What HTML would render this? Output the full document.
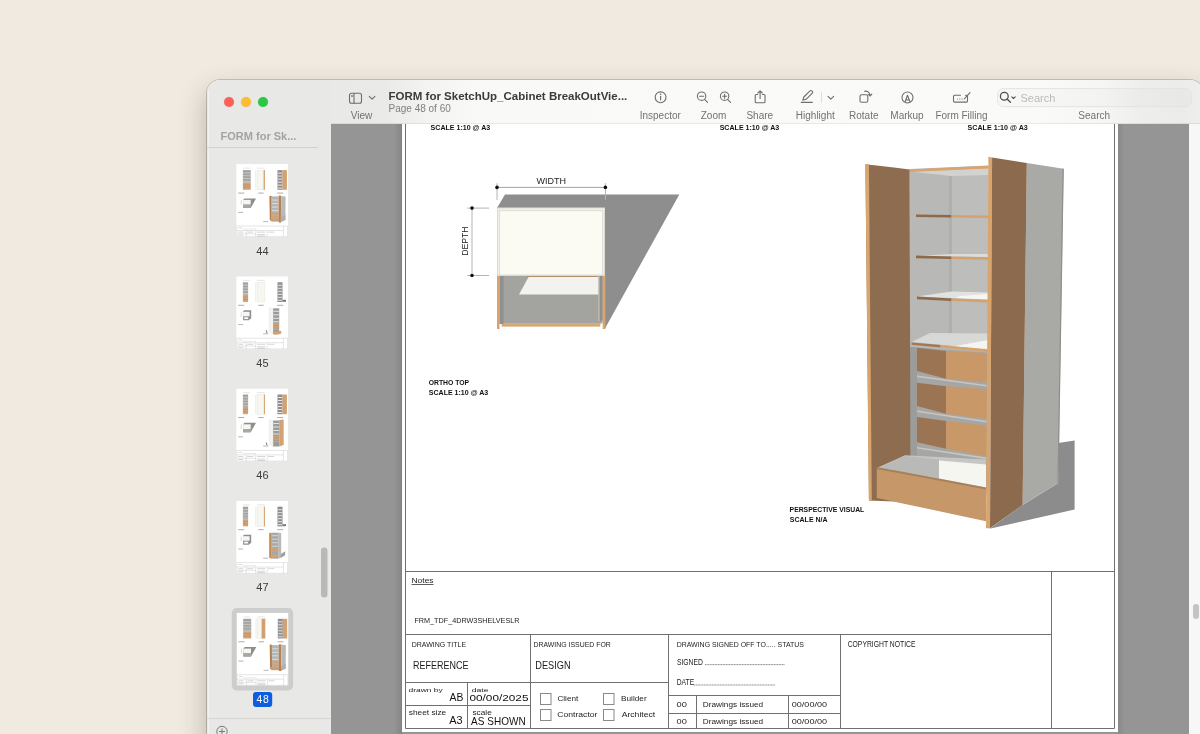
<!DOCTYPE html>
<html><head><meta charset="utf-8">
<style>
html,body{margin:0;padding:0;}
body{width:1200px;height:734px;overflow:hidden;position:relative;background:#f0eae0;font-family:"Liberation Sans",sans-serif;}
.abs{position:absolute;}
#shadow{position:absolute;left:207px;top:80px;width:996px;height:720px;border-radius:13px;box-shadow:0 12px 28px rgba(45,42,36,0.30),0 0 0 0.8px rgba(70,66,60,0.30);}
#win{position:absolute;left:207px;top:80px;width:996px;height:700px;border-radius:13px 13px 0 0;overflow:hidden;background:#e8e8e7;}
#side{position:absolute;left:0;top:0;width:124px;height:700px;background:#e8e8e7;}
#doc{position:absolute;left:124px;top:44px;width:858px;height:660px;background:#959595;}
#tb{position:absolute;left:124px;top:0;width:872px;height:44px;background:linear-gradient(90deg,#e9e9e8 0px,#eaeae9 55px,#f3f3f2 95px,#f9f9f8 150px,#fafaf9 700px,#f6f6f5 770px,#eeeeed 810px,#ebebea 850px,#eeeeed 869px);}
#tb:after{content:"";position:absolute;left:0;right:0;bottom:0;height:1px;background:rgba(0,0,0,0.07);}
#vscroll{position:absolute;left:982px;top:44px;width:14px;height:660px;background:#f7f7f7;}
.lbl{position:absolute;font-size:10px;color:#7c7c7c;white-space:nowrap;line-height:10px;}
.tl{position:absolute;width:10.6px;height:10.6px;border-radius:50%;box-shadow:0 0 0 0.5px rgba(0,0,0,0.06);}
svg text{font-family:"Liberation Sans",sans-serif;}
svg{will-change:transform;}
</style></head>
<body>
<div id="shadow"></div>
<div id="win">
  <div id="side"></div><div class="abs" style="left:0.5px;top:10px;width:1.5px;height:700px;background:#f2f2f1"></div>
  <div id="doc"></div>
  <div id="vscroll"><div style="position:absolute;left:4px;top:480px;width:6px;height:15px;border-radius:3px;background:#c4c4c4"></div></div>
  <div class="abs" style="left:-207px;top:-80px;width:1200px;height:734px">
<svg class="abs" style="left:0;top:0" width="1200" height="734" viewBox="0 0 1200 734">
 <!-- page -->
 <defs><linearGradient id="pshL" x1="0" x2="1"><stop offset="0" stop-color="#000" stop-opacity="0"/><stop offset="1" stop-color="#000" stop-opacity="0.10"/></linearGradient>
 <linearGradient id="pshR" x1="1" x2="0"><stop offset="0" stop-color="#000" stop-opacity="0"/><stop offset="1" stop-color="#000" stop-opacity="0.08"/></linearGradient></defs>
 <rect x="394" y="80" width="8" height="660" fill="url(#pshL)"/>
 <rect x="1118" y="80" width="6" height="660" fill="url(#pshR)"/>
 <rect x="401.3" y="80" width="0.9" height="660" fill="#7a7a7a" opacity="0.6"/>
 <rect x="402" y="80" width="716" height="652" fill="#ffffff"/>
 <g fill="none" stroke="#707070" stroke-width="1">
  <path d="M405.5 80V728.5H1114.5V80"/>
  <path d="M405 571.5H1114"/>
  <path d="M1051.5 571V728"/>
  <path d="M405 634.5H1051"/>
  <path d="M530.5 634V728M668.5 634V728M840.5 634V728"/>
  <path d="M405 682.5H668"/>
  <path d="M467.5 682V728"/>
  <path d="M405 705.5H530"/>
  <path d="M668 695.5H840M668 713.5H840"/>
  <path d="M696.5 695V728M788.5 695V728"/>
 </g>
 <!-- checkboxes -->
 <g fill="none" stroke="#8a8a8a" stroke-width="1">
  <rect x="540.5" y="693.5" width="10.5" height="11"/>
  <rect x="540.5" y="709.5" width="10.5" height="11"/>
  <rect x="603.5" y="693.5" width="10.5" height="11"/>
  <rect x="603.5" y="709.5" width="10.5" height="11"/>
 </g>
 <!-- texts -->
<text transform="translate(411.53,583.20) scale(1.164,1)" font-size="7.25" fill="#222" text-decoration="underline">Notes</text>
<text transform="translate(414.42,623.00) scale(1.031,1)" font-size="7.04" fill="#1c1c1c" >FRM_TDF_4DRW3SHELVESLR</text>
<text transform="translate(411.74,646.75) scale(0.882,1)" font-size="7.93" fill="#222" >DRAWING TITLE</text>
<text transform="translate(413.08,669.00) scale(0.838,1)" font-size="10.71" fill="#1a1a1a" >REFERENCE</text>
<text transform="translate(533.45,646.75) scale(0.885,1)" font-size="7.82" fill="#222" >DRAWING ISSUED FOR</text>
<text transform="translate(535.26,669.00) scale(0.874,1)" font-size="10.56" fill="#1a1a1a" >DESIGN</text>
<text transform="translate(676.64,646.80) scale(0.884,1)" font-size="7.89" fill="#222" >DRAWING SIGNED OFF TO..... STATUS</text>
<text transform="translate(676.93,664.90) scale(0.832,1)" font-size="8.17" fill="#222" >SIGNED</text>
<text transform="translate(676.66,685.30) scale(0.802,1)" font-size="8.41" fill="#222" >DATE</text>
<text transform="translate(847.66,647.00) scale(0.829,1)" font-size="8.21" fill="#222" >COPYRIGHT NOTICE</text>
<text transform="translate(408.56,692.00) scale(1.373,1)" font-size="6.16" fill="#1c1c1c" >drawn by</text>
<text transform="translate(449.60,700.80) scale(0.945,1)" font-size="11.01" fill="#111" >AB</text>
<text transform="translate(408.73,714.60) scale(1.218,1)" font-size="6.85" fill="#1c1c1c" >sheet size</text>
<text transform="translate(449.20,723.70) scale(1.022,1)" font-size="10.71" fill="#111" >A3</text>
<text transform="translate(471.65,692.00) scale(1.446,1)" font-size="6.03" fill="#1c1c1c" >date</text>
<text transform="translate(469.45,700.80) scale(1.197,1)" font-size="9.86" fill="#111" >00/00/2025</text>
<text transform="translate(472.43,714.60) scale(1.288,1)" font-size="6.44" fill="#1c1c1c" >scale</text>
<text transform="translate(471.10,724.60) scale(0.989,1)" font-size="10.14" fill="#111" >AS SHOWN</text>
<text transform="translate(557.39,701.20) scale(1.170,1)" font-size="6.99" fill="#1c1c1c" >Client</text>
<text transform="translate(557.37,717.30) scale(1.092,1)" font-size="7.86" fill="#1c1c1c" >Contractor</text>
<text transform="translate(621.04,701.20) scale(1.180,1)" font-size="6.99" fill="#1c1c1c" >Builder</text>
<text transform="translate(621.70,717.30) scale(1.146,1)" font-size="7.53" fill="#1c1c1c" >Architect</text>
<text transform="translate(676.62,707.20) scale(1.225,1)" font-size="7.57" fill="#222" >00</text>
<text transform="translate(702.84,707.20) scale(1.136,1)" font-size="7.26" fill="#222" >Drawings issued</text>
<text transform="translate(791.73,707.20) scale(1.253,1)" font-size="7.26" fill="#222" >00/00/00</text>
<text transform="translate(676.62,724.10) scale(1.180,1)" font-size="7.86" fill="#222" >00</text>
<text transform="translate(702.84,724.10) scale(1.095,1)" font-size="7.53" fill="#222" >Drawings issued</text>
<text transform="translate(791.73,724.10) scale(1.207,1)" font-size="7.53" fill="#222" >00/00/00</text>
<text transform="translate(430.56,129.90) scale(0.897,1)" font-size="7.89" font-weight="bold" fill="#111" >SCALE 1:10 @ A3</text>
<text transform="translate(719.66,129.90) scale(0.896,1)" font-size="7.89" font-weight="bold" fill="#111" >SCALE 1:10 @ A3</text>
<text transform="translate(967.56,129.90) scale(0.905,1)" font-size="7.89" font-weight="bold" fill="#111" >SCALE 1:10 @ A3</text>
<text transform="translate(428.63,385.30) scale(0.904,1)" font-size="7.57" font-weight="bold" fill="#111" >ORTHO TOP</text>
<text transform="translate(428.76,395.30) scale(0.945,1)" font-size="7.46" font-weight="bold" fill="#111" >SCALE 1:10 @ A3</text>
<text transform="translate(789.59,511.70) scale(0.877,1)" font-size="7.79" font-weight="bold" fill="#111" >PERSPECTIVE VISUAL</text>
<text transform="translate(789.86,522.00) scale(0.890,1)" font-size="7.88" font-weight="bold" fill="#111" >SCALE N/A</text>
<text transform="translate(536.40,183.70) scale(0.991,1)" font-size="9.13" fill="#222" >WIDTH</text>
 <g stroke="#555" stroke-width="0.7" stroke-dasharray="1.1,0.5">
  <path d="M705 664.6H785M694.2 685H775"/>
 </g>
 <!-- ortho top drawing -->
 <polygon points="497,208 505,194.4 679.3,194.4 604.7,329 497,329" fill="#8e8e8e"/>
 <rect x="499" y="275" width="104" height="55" fill="#ffffff"/>
 <rect x="499.5" y="275" width="103" height="48.5" fill="#a3a39f"/>
 <rect x="499.5" y="276" width="4" height="48" fill="#8f8f8d"/>
 <rect x="598.3" y="276" width="4.4" height="44.6" fill="#8e8e8e"/>
 <rect x="598.3" y="276" width="1.2" height="45" fill="#cfc6b8"/>
 <polygon points="528.6,277 598.3,277 598.3,294.5 519,294.5" fill="#f2f2ee"/>
 <rect x="527" y="275.2" width="71.3" height="1.6" fill="#b48a62"/>
 <rect x="501.7" y="323.6" width="98.6" height="1" fill="#a88462"/>
 <rect x="501.7" y="324.3" width="98.6" height="2.3" fill="#d9a56d"/>
 <rect x="497" y="276" width="2.5" height="53" fill="#d8a46c"/>
 <rect x="602.7" y="276" width="2.7" height="53" fill="#d8a46c"/>
 <rect x="497.5" y="208" width="107" height="67.5" fill="#f2f2ea" stroke="#dcdcd4" stroke-width="1"/>
 <rect x="499.3" y="210.7" width="103.4" height="64.3" fill="#fbfbf4" stroke="#d6d6ce" stroke-width="0.8"/>
 <g stroke="#8a8a8a" stroke-width="0.8" fill="none">
  <path d="M497 187.4H605.4"/>
 </g>
 <g stroke="#b4b4b4" stroke-width="1" fill="none">
  <path d="M497 183.2V200M605.4 183.2V200"/>
  <path d="M472 208.1V275.5"/>
  <path d="M467.2 208.1H489.2M467.2 275.5H489.2"/>
 </g>
 <g fill="#111">
  <circle cx="497" cy="187.4" r="1.8"/><circle cx="605.4" cy="187.4" r="1.8"/>
  <circle cx="472" cy="208.1" r="1.8"/><circle cx="472" cy="275.5" r="1.8"/>
 </g>
 <text transform="translate(467.7,255.8) rotate(-90) scale(0.9,1)" font-size="9.6" fill="#1a1a1a">DEPTH</text>
 <!-- perspective cabinet -->
 <polygon points="1058.3,442.9 1074.6,440.4 1074.6,509.6 989.6,528.7 1022.6,505 1058.3,483" fill="#8c8c8c"/>
 <polygon points="1026.8,162.9 1063.6,168.7 1058.3,483 1022.6,505" fill="#a9a9a6"/>
 <polygon points="1062.6,168.5 1063.8,168.7 1058.6,483 1057.4,483.5" fill="#8e8e8c"/>
 <polygon points="909.6,169 988.4,165.5 988.4,495 909.6,478" fill="#b8b8b6"/>
 <polygon points="951,175 988.4,174 988.4,350 951,346" fill="#bdbdbb"/>
 <polygon points="948.8,175 952,175 952,346 948.8,345" fill="#afafad"/>
 <polygon points="909.6,171.5 988.4,168 988.4,175 951,176" fill="#d2d2d0"/>
 <polygon points="909.6,169.4 988.4,165.8 988.4,168.6 909.6,172" fill="#d8a56e"/>
 <!-- shelves -->
 <polygon points="916,214.6 951.5,215 951.5,217.4 916,217" fill="#8c6a4a"/>
 <polygon points="951.5,215 988.4,215.6 988.4,218 951.5,217.4" fill="#d6a26c"/>
 <polygon points="916,256 951.5,254 988.4,254 988.4,257 951.5,256.5" fill="#dcdcda"/>
 <polygon points="916,255.6 951.5,256.5 951.5,259 916,258.2" fill="#8c6a4a"/>
 <polygon points="951.5,256.5 988.4,257.2 988.4,259.8 951.5,259" fill="#d6a26c"/>
 <polygon points="917,296.5 951.5,291.5 988.4,292.5 988.4,299 951.5,298" fill="#e2e2e0"/>
 <polygon points="960,296 988.4,294 988.4,299.5 955,298" fill="#f6f6f4"/>
 <polygon points="917,296.6 951.5,298.4 951.5,301 917,299.2" fill="#8c6a4a"/>
 <polygon points="951.5,298.4 988.4,300 988.4,302.6 951.5,301" fill="#d6a26c"/>
 <!-- fixed shelf -->
 <polygon points="911.6,342 930,333 988.4,333.5 988.4,349.5 940.5,344.8" fill="#d8d8d6"/>
 <polygon points="955,346 988.4,340 988.4,349 950,346" fill="#f4f4f2"/>
 <polygon points="911.6,342.4 940.5,345 940.5,347.4 911.6,344.8" fill="#a07856"/>
 <polygon points="940.5,345 988.4,349.6 988.4,352.2 940.5,347.4" fill="#d6a26c"/>
 <!-- drawer cavity -->
 <polygon points="910,347 988.4,352.5 988.4,492 910,476" fill="#a6a6a4"/>
 <polygon points="910,347 917,347.5 917,470 910,472" fill="#9c9c9a"/>
 <polygon points="917,375.5 986.7,385 986.7,386.6 917,377.1" fill="#c6c6c4"/>
 <polygon points="917,410.5 986.7,421 986.7,422.6 917,412.1" fill="#c6c6c4"/>
 <polygon points="917,447 986.7,457.6 986.7,459.2 917,448.6" fill="#c6c6c4"/>
 <!-- drawers -->
 <polygon points="917,347.8 946,350.9 946,378.8 917,371" fill="#9b7453"/>
 <polygon points="946,350.9 986.7,353 986.7,382.7 946,378.8" fill="#c99868"/>
 <polygon points="917,382.7 946,386.3 946,413.8 917,406" fill="#9b7453"/>
 <polygon points="946,386.3 986.7,389.2 986.7,419 946,413.8" fill="#c99868"/>
 <polygon points="917,417.1 946,421 946,448.7 917,442.3" fill="#9b7453"/>
 <polygon points="946,421 986.7,425.4 986.7,456.5 946,448.7" fill="#c99868"/>
 <!-- left door -->
 <polygon points="865.4,164.2 909.6,169.4 910.5,502 869,500.5" fill="#8d6c4f"/>
 <polygon points="865.4,164.2 868.9,164.6 871.8,500.8 868.8,500.5" fill="#d8a56e"/>
 <!-- bottom drawer -->
 <polygon points="876.8,468.1 905,455.2 986,459.5 986,488.8" fill="#c6c6c4"/>
 <polygon points="880,467.5 905,456 939,459.6 939,478.5" fill="#b9b9b7"/>
 <polygon points="939,460.5 986,464.5 986,487.4 939,478.5" fill="#f6f6f1"/>
 <polygon points="876.8,467 986,487.6 986,490 876.8,469.4" fill="#a88058"/>
 <polygon points="876.8,469 986,489.5 986,521.2 876.8,497.9" fill="#c59769"/>
 <!-- right door -->
 <polygon points="988.4,156.8 992.1,157.5 990,528.2 986,528.2" fill="#d8a56e"/>
 <polygon points="992.1,157.5 1026.8,162.9 1022.6,505 990,528.2" fill="#8b6a4d"/>
</svg>
  </div>
  <div id="tb"></div>
</div>
<svg class="abs" style="left:0;top:0" width="1200" height="734" viewBox="0 0 1200 734">
 <defs>
  <symbol id="th44" viewBox="0 0 52 73" width="52" height="73">
   <rect x="0" y="0" width="52" height="73" fill="#fff"/>
   <path d="M7 4.1h6.5M21 4.1h7.5" stroke="#ccc" stroke-width="0.5"/>
   <rect x="6.7" y="6" width="7.8" height="12.5" fill="#a3a3a1"/>
   <path d="M6.7 8.8h7.8M6.7 11.6h7.8M6.7 14.4h7.8M6.7 17.2h7.8" stroke="#d4d4d2" stroke-width="0.7"/>
   <rect x="6.7" y="18.5" width="7.8" height="7.2" fill="#d2a478"/>
   <path d="M6.7 20.8h7.8M6.7 23.2h7.8" stroke="#a88562" stroke-width="0.5"/>
   <rect x="20.9" y="6" width="7.8" height="19.7" fill="#f7f7f0" stroke="#e4e4de" stroke-width="0.4"/>
   <rect x="27.4" y="6" width="1.3" height="19.7" fill="#d2a070"/>
   <path d="M19.6 6v19.7" stroke="#d0d0d0" stroke-width="0.4"/>
   <rect x="41.3" y="6" width="5" height="19.7" fill="#8e8e8e"/>
   <path d="M41.8 9h4M41.8 12h4M41.8 15h4M41.8 18h4M41.8 21h4M41.8 24h4" stroke="#f0f0f0" stroke-width="0.9"/>
   <rect x="46.3" y="6" width="4.4" height="19.7" fill="#d4a272"/>
   <path d="M2 29h6M22 29h5.5M41 29h6" stroke="#888" stroke-width="0.7"/>
   <polygon points="6.9,36 8.2,34.3 19.8,34.3 14.5,43.8 6.9,43.8" fill="#8e8e8e"/>
   <rect x="6.9" y="35.8" width="7.6" height="4.7" fill="#f7f7ef"/>
   <rect x="6.9" y="40.5" width="7.6" height="3.3" fill="#a8a8a6"/>
   <path d="M5 36v4.5" stroke="#999" stroke-width="0.4"/>
   <path d="M2 48.3h5" stroke="#999" stroke-width="0.7"/>
   <polygon points="45,52 49.4,50.5 49.4,56 44,58.3" fill="#b0b0b0"/>
   <polygon points="33.2,31.7 35.4,32 35.6,57 33.6,56" fill="#b07f54"/>
   <rect x="35.4" y="32.3" width="7" height="25" fill="#b5b5b3"/>
   <path d="M35.6 36h6.6M35.6 39.5h6.6M35.6 43h6.6M35.6 46.5h6.6" stroke="#e6e6e4" stroke-width="0.8"/>
   <rect x="35.6" y="48.5" width="6.6" height="2.2" fill="#d4a272"/>
   <rect x="35.6" y="51.5" width="6.6" height="2.2" fill="#d4a272"/>
   <rect x="34.5" y="54.3" width="8" height="3" fill="#cf9f70"/>
   <polygon points="42.4,31.4 45,31.7 44.6,58.3 42.4,58.3" fill="#b58355"/>
   <polygon points="45,31.8 49.4,32.4 49.2,50.8 44.8,53" fill="#b9b9b7"/>
   <path d="M27 57.5h5" stroke="#999" stroke-width="0.7"/>
   <g stroke="#b4b4b4" stroke-width="0.35" fill="none"><path d="M0.6 61.9H51.4M0.6 66.4H47.2M47.2 61.9V73M10 66.4V73M19.5 66.4V73M31 66.4V73M0.6 69.7H19.5M0.6 72.6H51.4M0.6 61.9V73M51.4 61.9V73"/></g>
   <path d="M2.5 63.8h3M2 68h5M11 68h6M21 68h8M32 68h6M2 71h5M21 70.5h8M21 72h8" stroke="#aaa" stroke-width="0.5"/>
   <path d="M6 65h14" stroke="#c8c8c8" stroke-width="0.4"/>
   </symbol>
  <symbol id="th45" viewBox="0 0 52 73" width="52" height="73">
   <rect x="0" y="0" width="52" height="73" fill="#fff"/>
   <path d="M7 4.1h6.5M21 4.1h7.5" stroke="#ccc" stroke-width="0.5"/>
   <rect x="6.7" y="6" width="5.2" height="12.5" fill="#a3a3a1"/>
   <path d="M6.7 8.8h5.2M6.7 11.6h5.2M6.7 14.4h5.2M6.7 17.2h5.2" stroke="#d4d4d2" stroke-width="0.7"/>
   <rect x="6.7" y="18.5" width="5.2" height="7.2" fill="#d2a478"/>
   <path d="M6.7 20.8h5.2M6.7 23.2h5.2" stroke="#a88562" stroke-width="0.5"/>
   <rect x="20.9" y="6" width="7.8" height="19.7" fill="#f7f7f0" stroke="#e4e4de" stroke-width="0.4"/>
   <path d="M19.6 6v19.7" stroke="#d0d0d0" stroke-width="0.4"/>
   <rect x="41.3" y="6" width="5" height="19.7" fill="#8e8e8e"/>
   <path d="M41.8 9h4M41.8 12h4M41.8 15h4M41.8 18h4M41.8 21h4M41.8 24h4" stroke="#f0f0f0" stroke-width="0.9"/>
   <rect x="46.3" y="23.5" width="3.5" height="2" fill="#777"/>
   <path d="M2 29h6M22 29h5.5M41 29h6" stroke="#888" stroke-width="0.7"/>
   <polygon points="6.9,35 8,34 15,34 15,42 12.5,44 6.9,44" fill="#8e8e8e"/>
   <rect x="6.9" y="35.5" width="6.5" height="4.5" fill="#f7f7ef"/>
   <rect x="8" y="41" width="4" height="1.8" fill="#fff"/>
   <path d="M5 36v4.5" stroke="#999" stroke-width="0.4"/>
   <path d="M2 48.3h5" stroke="#999" stroke-width="0.7"/>
   <polygon points="33,31.5 37,32 37,58 33,56" fill="#f4f4ee" stroke="#ddd" stroke-width="0.3"/>
   <rect x="37" y="32" width="6" height="26" fill="#9a9a9a"/>
   <path d="M37.3 35h5.4M37.3 38.5h5.4M37.3 42h5.4M37.3 45.5h5.4" stroke="#eee" stroke-width="0.9"/>
   <path d="M37.3 48h5.4M37.3 50.5h5.4M37.3 53h5.4" stroke="#d4a272" stroke-width="1.4"/>
   <polygon points="38,55.5 45,54.5 45,57.5 38,58.5" fill="#d4a272"/>
   <path d="M30 54l1 3" stroke="#555" stroke-width="0.8"/>
   <path d="M27 57.5h5" stroke="#999" stroke-width="0.7"/>
   <g stroke="#b4b4b4" stroke-width="0.35" fill="none"><path d="M0.6 61.9H51.4M0.6 66.4H47.2M47.2 61.9V73M10 66.4V73M19.5 66.4V73M31 66.4V73M0.6 69.7H19.5M0.6 72.6H51.4M0.6 61.9V73M51.4 61.9V73"/></g>
   <path d="M2.5 63.8h3M2 68h5M11 68h6M21 68h8M32 68h6M2 71h5M21 70.5h8M21 72h8" stroke="#aaa" stroke-width="0.5"/>
   <path d="M6 65h14" stroke="#c8c8c8" stroke-width="0.4"/>
   </symbol>
  <symbol id="th46" viewBox="0 0 52 73" width="52" height="73">
   <rect x="0" y="0" width="52" height="73" fill="#fff"/>
   <path d="M7 4.1h6.5M21 4.1h7.5" stroke="#ccc" stroke-width="0.5"/>
   <rect x="6.7" y="6" width="5.2" height="12.5" fill="#a3a3a1"/>
   <path d="M6.7 8.8h5.2M6.7 11.6h5.2M6.7 14.4h5.2M6.7 17.2h5.2" stroke="#d4d4d2" stroke-width="0.7"/>
   <rect x="6.7" y="18.5" width="5.2" height="7.2" fill="#d2a478"/>
   <path d="M6.7 20.8h5.2M6.7 23.2h5.2" stroke="#a88562" stroke-width="0.5"/>
   <rect x="20.9" y="6" width="7.8" height="19.7" fill="#f7f7f0" stroke="#e4e4de" stroke-width="0.4"/>
   <rect x="27.7" y="6" width="1.0" height="19.7" fill="#d2a070"/>
   <path d="M19.6 6v19.7" stroke="#d0d0d0" stroke-width="0.4"/>
   <rect x="41.3" y="6" width="5" height="19.7" fill="#8e8e8e"/>
   <path d="M41.8 9h4M41.8 12h4M41.8 15h4M41.8 18h4M41.8 21h4M41.8 24h4" stroke="#f0f0f0" stroke-width="0.9"/>
   <rect x="46.3" y="6" width="4.4" height="19.7" fill="#d4a272"/>
   <path d="M2 29h6M22 29h5.5M41 29h6" stroke="#888" stroke-width="0.7"/>
   <polygon points="6.9,36 8.2,34.3 19.8,34.3 14.5,43.8 6.9,43.8" fill="#8e8e8e"/>
   <rect x="6.9" y="35.8" width="7.6" height="4.7" fill="#f7f7ef"/>
   <rect x="6.9" y="40.5" width="7.6" height="3.3" fill="#a8a8a6"/>
   <path d="M5 36v4.5" stroke="#999" stroke-width="0.4"/>
   <path d="M2 48.3h5" stroke="#999" stroke-width="0.7"/>
   <polygon points="33,31.5 37,32 37,58 33,56" fill="#f4f4ee" stroke="#ddd" stroke-width="0.3"/>
   <rect x="37" y="32" width="6" height="26" fill="#9a9a9a"/>
   <path d="M37.3 35h5.4M37.3 38.5h5.4M37.3 42h5.4M37.3 45.5h5.4" stroke="#eee" stroke-width="0.9"/>
   <path d="M37.3 48h5.4M37.3 50.5h5.4M37.3 53h5.4" stroke="#d4a272" stroke-width="1.4"/>
   <polygon points="43,31.5 47.5,31 47.5,56.5 43,58" fill="#d4a272"/>
   <path d="M30 54l1 3" stroke="#555" stroke-width="0.8"/>
   <path d="M27 57.5h5" stroke="#999" stroke-width="0.7"/>
   <g stroke="#b4b4b4" stroke-width="0.35" fill="none"><path d="M0.6 61.9H51.4M0.6 66.4H47.2M47.2 61.9V73M10 66.4V73M19.5 66.4V73M31 66.4V73M0.6 69.7H19.5M0.6 72.6H51.4M0.6 61.9V73M51.4 61.9V73"/></g>
   <path d="M2.5 63.8h3M2 68h5M11 68h6M21 68h8M32 68h6M2 71h5M21 70.5h8M21 72h8" stroke="#aaa" stroke-width="0.5"/>
   <path d="M6 65h14" stroke="#c8c8c8" stroke-width="0.4"/>
   </symbol>
  <symbol id="th47" viewBox="0 0 52 73" width="52" height="73">
   <rect x="0" y="0" width="52" height="73" fill="#fff"/>
   <path d="M7 4.1h6.5M21 4.1h7.5" stroke="#ccc" stroke-width="0.5"/>
   <rect x="6.7" y="6" width="5.2" height="12.5" fill="#a3a3a1"/>
   <path d="M6.7 8.8h5.2M6.7 11.6h5.2M6.7 14.4h5.2M6.7 17.2h5.2" stroke="#d4d4d2" stroke-width="0.7"/>
   <rect x="6.7" y="18.5" width="5.2" height="7.2" fill="#d2a478"/>
   <path d="M6.7 20.8h5.2M6.7 23.2h5.2" stroke="#a88562" stroke-width="0.5"/>
   <rect x="20.9" y="6" width="7.8" height="19.7" fill="#f7f7f0" stroke="#e4e4de" stroke-width="0.4"/>
   <rect x="27.7" y="6" width="1.0" height="19.7" fill="#d2a070"/>
   <path d="M19.6 6v19.7" stroke="#d0d0d0" stroke-width="0.4"/>
   <rect x="41.3" y="6" width="5" height="19.7" fill="#8e8e8e"/>
   <path d="M41.8 9h4M41.8 12h4M41.8 15h4M41.8 18h4M41.8 21h4M41.8 24h4" stroke="#f0f0f0" stroke-width="0.9"/>
   <rect x="46.3" y="23.5" width="3.5" height="2" fill="#777"/>
   <path d="M2 29h6M22 29h5.5M41 29h6" stroke="#888" stroke-width="0.7"/>
   <polygon points="6.9,35 8,34 15,34 15,42 12.5,44 6.9,44" fill="#8e8e8e"/>
   <rect x="6.9" y="35.5" width="6.5" height="4.5" fill="#f7f7ef"/>
   <rect x="8" y="41" width="4" height="1.8" fill="#fff"/>
   <path d="M5 36v4.5" stroke="#999" stroke-width="0.4"/>
   <path d="M2 48.3h5" stroke="#999" stroke-width="0.7"/>
   <polygon points="33,32 35.5,32.3 35.5,58 33,57" fill="#c08a58"/>
   <rect x="35.5" y="32" width="7" height="26" fill="#a8a8a8"/>
   <path d="M35.8 35h6.4M35.8 38.5h6.4M35.8 42h6.4M35.8 45.5h6.4" stroke="#ddd" stroke-width="0.9"/>
   <path d="M35.8 48h6.4M35.8 50.5h6.4" stroke="#d4a272" stroke-width="1.4"/>
   <rect x="34.5" y="54" width="6.5" height="3" fill="#d4a272"/>
   <polygon points="42.5,32 45,32.3 45,56 42.5,58" fill="#b9b9b7"/>
   <polygon points="45,53 49,50.5 49,54.5 44,57.5" fill="#a0a0a0"/>
   <path d="M27 57.5h5" stroke="#999" stroke-width="0.7"/>
   <g stroke="#b4b4b4" stroke-width="0.35" fill="none"><path d="M0.6 61.9H51.4M0.6 66.4H47.2M47.2 61.9V73M10 66.4V73M19.5 66.4V73M31 66.4V73M0.6 69.7H19.5M0.6 72.6H51.4M0.6 61.9V73M51.4 61.9V73"/></g>
   <path d="M2.5 63.8h3M2 68h5M11 68h6M21 68h8M32 68h6M2 71h5M21 70.5h8M21 72h8" stroke="#aaa" stroke-width="0.5"/>
   <path d="M6 65h14" stroke="#c8c8c8" stroke-width="0.4"/>
   </symbol>
  <symbol id="th48" viewBox="0 0 52 73" width="52" height="73">
   <rect x="0" y="0" width="52" height="73" fill="#fff"/>
   <path d="M7 4.1h6.5M21 4.1h7.5" stroke="#ccc" stroke-width="0.5"/>
   <rect x="6.7" y="6" width="8" height="12.5" fill="#a3a3a1"/>
   <path d="M6.7 8.8h8M6.7 11.6h8M6.7 14.4h8M6.7 17.2h8" stroke="#d4d4d2" stroke-width="0.7"/>
   <rect x="6.7" y="18.5" width="8" height="7.2" fill="#d2a478"/>
   <path d="M6.7 20.8h8M6.7 23.2h8" stroke="#a88562" stroke-width="0.5"/>
   <rect x="20.9" y="6" width="7.8" height="19.7" fill="#f7f7f0" stroke="#e4e4de" stroke-width="0.4"/>
   <rect x="25.099999999999998" y="6" width="3.6" height="19.7" fill="#d2a070"/>
   <path d="M19.6 6v19.7" stroke="#d0d0d0" stroke-width="0.4"/>
   <rect x="41.3" y="6" width="5" height="19.7" fill="#8e8e8e"/>
   <path d="M41.8 9h4M41.8 12h4M41.8 15h4M41.8 18h4M41.8 21h4M41.8 24h4" stroke="#f0f0f0" stroke-width="0.9"/>
   <rect x="46.3" y="6" width="4.4" height="19.7" fill="#d4a272"/>
   <path d="M2 29h6M22 29h5.5M41 29h6" stroke="#888" stroke-width="0.7"/>
   <polygon points="6.9,36 8.2,34.3 19.8,34.3 14.5,43.8 6.9,43.8" fill="#8e8e8e"/>
   <rect x="6.9" y="35.8" width="7.6" height="4.7" fill="#f7f7ef"/>
   <rect x="6.9" y="40.5" width="7.6" height="3.3" fill="#a8a8a6"/>
   <path d="M5 36v4.5" stroke="#999" stroke-width="0.4"/>
   <path d="M2 48.3h5" stroke="#999" stroke-width="0.7"/>
   <polygon points="45,52 49.4,50.5 49.4,56 44,58.3" fill="#b0b0b0"/>
   <polygon points="33.2,31.7 35.4,32 35.6,57 33.6,56" fill="#b07f54"/>
   <rect x="35.4" y="32.3" width="7" height="25" fill="#b5b5b3"/>
   <path d="M35.6 36h6.6M35.6 39.5h6.6M35.6 43h6.6M35.6 46.5h6.6" stroke="#e6e6e4" stroke-width="0.8"/>
   <rect x="35.6" y="48.5" width="6.6" height="2.2" fill="#d4a272"/>
   <rect x="35.6" y="51.5" width="6.6" height="2.2" fill="#d4a272"/>
   <rect x="34.5" y="54.3" width="8" height="3" fill="#cf9f70"/>
   <polygon points="42.4,31.4 45,31.7 44.6,58.3 42.4,58.3" fill="#b58355"/>
   <polygon points="45,31.8 49.4,32.4 49.2,50.8 44.8,53" fill="#b9b9b7"/>
   <path d="M27 57.5h5" stroke="#999" stroke-width="0.7"/>
   <g stroke="#b4b4b4" stroke-width="0.35" fill="none"><path d="M0.6 61.9H51.4M0.6 66.4H47.2M47.2 61.9V73M10 66.4V73M19.5 66.4V73M31 66.4V73M0.6 69.7H19.5M0.6 72.6H51.4M0.6 61.9V73M51.4 61.9V73"/></g>
   <path d="M2.5 63.8h3M2 68h5M11 68h6M21 68h8M32 68h6M2 71h5M21 70.5h8M21 72h8" stroke="#aaa" stroke-width="0.5"/>
   <path d="M6 65h14" stroke="#c8c8c8" stroke-width="0.4"/>
   </symbol>
 </defs>
 <use href="#th44" x="236.2" y="164.1"/>
 <use href="#th45" x="236.2" y="276.3"/>
 <use href="#th46" x="236.2" y="388.5"/>
 <use href="#th47" x="236.2" y="500.7"/>
 <rect x="231.8" y="608.1" width="61.3" height="82.4" rx="4.8" fill="#cdcdcd"/>
 <use href="#th48" x="236.5" y="612.8"/>
 <rect x="207" y="147" width="111" height="1" fill="#d2d2d1"/>
 <rect x="207" y="718" width="124" height="1" fill="#d6d6d5"/>
 <rect x="321" y="547.5" width="6.5" height="50" rx="3.2" fill="#b9b9b8"/>
 <circle cx="222" cy="731.5" r="5.2" fill="none" stroke="#777" stroke-width="1"/>
 <path d="M222 728.5v6M219 731.5h6" stroke="#777" stroke-width="1"/>
 <rect x="253" y="692" width="19.2" height="14.9" rx="3" fill="#0f5ddf"/>
 <g font-size="11" fill="#3c3c3c" text-anchor="middle">
  <text x="262.4" y="255">44</text>
  <text x="262.4" y="367">45</text>
  <text x="262.4" y="479">46</text>
  <text x="262.4" y="591">47</text>
  <text x="262.9" y="703.2" fill="#fff" font-size="10.4" letter-spacing="0.7">48</text>
 </g>
 <text x="220.6" y="140.3" font-size="11" font-weight="bold" fill="#a3a3a3">FORM for Sk...</text>
</svg>
<svg class="abs" style="left:0;top:0" width="1200" height="734" viewBox="0 0 1200 734">
 <g fill="none" stroke="#6e6e6e" stroke-width="1.1" stroke-linecap="round" stroke-linejoin="round">
  <!-- view sidebar icon -->
  <rect x="349.5" y="93.3" width="12" height="10" rx="2"/>
  <path d="M354 93.5v9.8"/>
  <path d="M369.3 96.4l2.8 2.8 2.8-2.8"/>
  <!-- info -->
  <circle cx="660.6" cy="97.3" r="5.4"/>
  <path d="M660.6 96.2v3.8"/>
  <!-- zoom out -->
  <circle cx="701.6" cy="96.2" r="4.2"/>
  <path d="M704.6 99.3l3 3M699.6 96.2h4"/>
  <!-- zoom in -->
  <circle cx="724.6" cy="96.2" r="4.2"/>
  <path d="M727.6 99.3l3 3M722.6 96.2h4M724.6 94.2v4"/>
  <!-- share -->
  <path d="M757.7 94.5h-1.5a1 1 0 0 0-1 1v6.2a1 1 0 0 0 1 1h7.8a1 1 0 0 0 1-1v-6.2a1 1 0 0 0-1-1h-1.5"/>
  <path d="M760.1 98.5v-7.5M757.9 93l2.2-2.2 2.2 2.2"/>
  <!-- highlight -->
  <path d="M802.8 100.3l1-3.3 6.2-6.2a1.2 1.2 0 0 1 1.7 0l0.6 0.6a1.2 1.2 0 0 1 0 1.7l-6.2 6.2z"/>
  <path d="M801.3 102.4h11"/>
  <path d="M828 96.3l2.8 2.8 2.8-2.8"/>
  <!-- rotate -->
  <rect x="860" y="94.7" width="7.8" height="7.6" rx="1.5"/>
  <path d="M864.5 91.2a5 5 0 0 1 5.8 4.5M868.5 94.5l1.8 1.5 1.5-1.8"/>
  <!-- markup -->
  <circle cx="907.5" cy="97.5" r="5.5"/>
  <path d="M905.2 101.5l2.3-6.2 2.3 6.2M906.3 99.5c0.8 0.6 1.6 0.6 2.4 0"/>
  <!-- form filling -->
  <path d="M965.5 95.3h1a1 1 0 0 1 1 1v4.8a1 1 0 0 1-1 1h-12a1 1 0 0 1-1-1v-4.8a1 1 0 0 1 1-1h6"/>
  <path d="M964.5 98.6l5.5-6"/>
  <!-- search -->
  <g stroke="#505050" stroke-width="1.3"><circle cx="1004.3" cy="96.2" r="3.9"/>
  <path d="M1007.1 99l3.3 3.3"/></g><path d="M1011.8 96.8l1.7 1.7 1.7-1.7" stroke="#505050"/>
 </g>
 <rect x="821" y="92" width="0.8" height="11" fill="#d8d8d8"/>
 <rect x="351" y="95" width="2" height="2" fill="#9a9a9a"/>
 <g fill="#6e6e6e">
  <circle cx="660.6" cy="94.3" r="0.8"/>
  <circle cx="957.5" cy="99" r="0.5"/><circle cx="959.3" cy="99" r="0.5"/><circle cx="961.1" cy="99" r="0.5"/><circle cx="962.9" cy="99" r="0.5"/>
 </g>
 <rect x="997.6" y="88.6" width="193.8" height="18" rx="6" fill="rgba(0,0,0,0.012)" stroke="#e2e2e2" stroke-width="0.9"/>
 <text x="388.5" y="100.2" font-size="11.5" font-weight="bold" fill="#3b3b3b">FORM for SketchUp_Cabinet BreakOutVie...</text>
 <text x="388.5" y="112" font-size="10" fill="#808080">Page 48 of 60</text>
 <text x="1020.5" y="102" font-size="11" fill="#b9b9b9">Search</text>
 <g font-size="10" fill="#727272" text-anchor="middle">
  <text x="361.5" y="119">View</text>
  <text x="660.3" y="119">Inspector</text>
  <text x="713.5" y="119">Zoom</text>
  <text x="759.8" y="119">Share</text>
  <text x="815.3" y="119">Highlight</text>
  <text x="863.8" y="119">Rotate</text>
  <text x="907" y="119">Markup</text>
  <text x="961.5" y="119">Form Filling</text>
  <text x="1094.2" y="119">Search</text>
 </g>
</svg>
<!-- traffic lights -->
<div class="tl" style="left:223.9px;top:96.6px;background:#fe5f57;"></div>
<div class="tl" style="left:240.9px;top:96.6px;background:#febc2e;"></div>
<div class="tl" style="left:257.9px;top:96.6px;background:#28c840;"></div>
</body></html>
